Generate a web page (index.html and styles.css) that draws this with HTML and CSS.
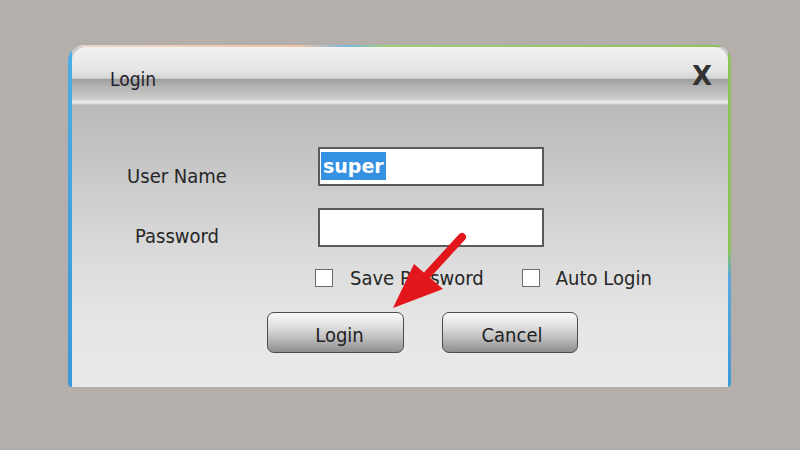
FILE: index.html
```html
<!DOCTYPE html>
<html lang="en">
<head>
    <meta charset="UTF-8">
    <title>Login</title>
    <link rel="stylesheet" href="styles.css">
</head>
<body>
<div class="page">
    <div class="frame">
        <div class="dialog">
            <div class="title-bar">
                <span class="title">Login</span>
                <span class="close">X</span>
            </div>
            <div class="content">
                <div class="row">
                    <label class="label label-user">User Name</label>
                    <div class="field"><span class="sel">super</span></div>
                </div>
                <div class="row">
                    <label class="label label-pass">Password</label>
                    <div class="field"></div>
                </div>
                <div class="checks">
                    <span class="box"></span>
                    <span class="check-text">Save Password</span>
                    <span class="box box-auto"></span>
                    <span class="check-text">Auto Login</span>
                </div>
                <div class="buttons">
                    <button class="btn">Login</button>
                    <button class="btn btn-cancel">Cancel</button>
                </div>
            </div>
        </div>
    </div>
    <!-- red arrow pointing to the login button -->
    <svg class="arrow" width="800" height="450" viewBox="0 0 800 450">
        <line x1="462" y1="237" x2="428" y2="274" stroke="#e3161b" stroke-width="8" stroke-linecap="round"/>
        <polygon points="414,264 443,289 393,308" fill="#e3161b"/>
    </svg>
</div>
</body>
</html>
```
FILE: styles.css
```css
body {
    margin: 0;
    background-color: #b4afab;
    font-family: "DejaVu Sans Condensed", "DejaVu Sans", sans-serif;
    font-stretch: condensed;
}
.page {
    position: relative;
    width: 800px;
    height: 450px;
    padding: 45px 0 0 68px;
    box-sizing: border-box;
}
.frame {
    width: 663px;
    padding: 2px 3px 0 4px;
    box-sizing: border-box;
    border-radius: 16px 16px 4px 4px;
    background:
        linear-gradient(#8cc35a, #8cc35a 60%, #5aa8de 68%, #3d9ad8) right top / 3px 100% no-repeat,
        linear-gradient(#4aaee6, #3a98d6) left top / 4px 100% no-repeat,
        linear-gradient(90deg, #ead8cc, #f0c4a4 35%, #7ab8e0 42%, #9ccf78 48%, #8cc35a) left top / 100% 2px no-repeat,
        #c9c9c9;
}
.dialog {
    border-radius: 14px 14px 2px 2px;
    overflow: hidden;
}
.title-bar {
    height: 58px;
    display: flex;
    align-items: center;
    justify-content: space-between;
    padding: 6px 16px 0 38px;
    box-sizing: border-box;
    background: linear-gradient(#f1f1f1 0, #e6e6e6 40%, #d4d4d4 54%, #9f9f9f 56%, #b3b3b3 68%, #cdcdcd 90%, #ececec 94%, #e4e4e4 97%, #bcbcbc 100%);
}
.title {
    font-size: 19px;
    color: #1e1e2e;
}
.close {
    font-family: "DejaVu Sans", sans-serif;
    font-stretch: normal;
    font-weight: bold;
    font-size: 26px;
    color: #333;
    margin-top: -6px;
}
.content {
    height: 282px;
    padding-top: 42px;
    box-sizing: border-box;
    background: linear-gradient(#b9b9b9 0, #c9c9c9 25%, #dcdcdc 55%, #e6e6e6 80%, #e9e9e9 100%);
}
.row {
    display: flex;
    align-items: center;
    gap: 36px;
    height: 39px;
    margin-bottom: 22px;
}
.label {
    width: 210px;
    text-align: center;
    font-size: 20px;
    line-height: 19px;
    color: #262626;
}
.label-user {
    padding-top: 20px;
}
.label-pass {
    padding-top: 18px;
}
.field {
    width: 226px;
    height: 39px;
    box-sizing: border-box;
    border: 2px solid #5a5a5a;
    background-color: #fff;
    padding: 3px 0 0 1px;
}
.sel {
    display: inline-block;
    background-color: #3591e2;
    color: #fff;
    font-family: "DejaVu Sans", sans-serif;
    font-stretch: normal;
    font-weight: bold;
    font-size: 19px;
    line-height: 28px;
    padding: 0 2px;
}
.checks {
    display: flex;
    align-items: center;
    height: 18px;
    margin-top: 1px;
    padding-left: 243px;
}
.box {
    width: 18px;
    height: 18px;
    box-sizing: border-box;
    border: 1px solid #6c6c6c;
    background-color: #fff;
    margin-right: 17px;
}
.box-auto {
    margin-left: 38px;
    margin-right: 16px;
}
.check-text {
    font-size: 20px;
    color: #262626;
}
.buttons {
    display: flex;
    gap: 38px;
    margin-top: 25px;
    padding-left: 195px;
}
.btn {
    width: 137px;
    height: 41px;
    border: 1px solid #4c4c4c;
    border-radius: 7px;
    background: linear-gradient(#f7f7f7, #e4e4e4 30%, #bdbdbd 65%, #8e8e8e);
    font-family: "DejaVu Sans Condensed", "DejaVu Sans", sans-serif;
    font-stretch: condensed;
    font-size: 20px;
    color: #222;
    padding: 5px 0 0 8px;
}
.btn-cancel {
    width: 136px;
    padding-left: 4px;
}
.arrow {
    position: absolute;
    top: 0;
    left: 0;
    pointer-events: none;
}
```
